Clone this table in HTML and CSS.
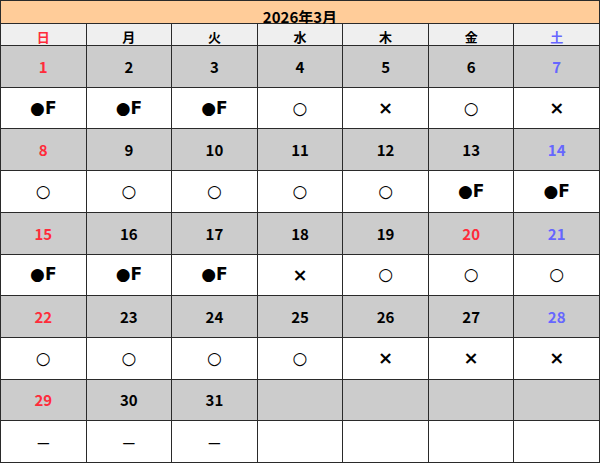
FILE: index.html
```html
<!DOCTYPE html>
<html lang="ja">
<head>
<meta charset="utf-8">
<link rel="stylesheet" href="styles.css">
</head>
<body>
<div class="cal">
  <div class="title">2026年3月</div>
  <div class="dow sun">日</div><div class="dow">月</div><div class="dow">火</div><div class="dow">水</div><div class="dow">木</div><div class="dow">金</div><div class="dow sat">土</div>

  <div class="d sun">1</div><div class="d">2</div><div class="d">3</div><div class="d">4</div><div class="d">5</div><div class="d">6</div><div class="d sat">7</div>
  <div class="m">●F</div><div class="m">●F</div><div class="m">●F</div><div class="m">○</div><div class="m x">×</div><div class="m">○</div><div class="m x">×</div>

  <div class="d sun">8</div><div class="d">9</div><div class="d">10</div><div class="d">11</div><div class="d">12</div><div class="d">13</div><div class="d sat">14</div>
  <div class="m">○</div><div class="m">○</div><div class="m">○</div><div class="m">○</div><div class="m">○</div><div class="m">●F</div><div class="m">●F</div>

  <div class="d sun">15</div><div class="d">16</div><div class="d">17</div><div class="d">18</div><div class="d">19</div><div class="d sun">20</div><div class="d sat">21</div>
  <div class="m">●F</div><div class="m">●F</div><div class="m">●F</div><div class="m x">×</div><div class="m">○</div><div class="m">○</div><div class="m">○</div>

  <div class="d sun">22</div><div class="d">23</div><div class="d">24</div><div class="d">25</div><div class="d">26</div><div class="d">27</div><div class="d sat">28</div>
  <div class="m">○</div><div class="m">○</div><div class="m">○</div><div class="m">○</div><div class="m x">×</div><div class="m x">×</div><div class="m x">×</div>

  <div class="d sun">29</div><div class="d">30</div><div class="d">31</div><div class="d"></div><div class="d"></div><div class="d"></div><div class="d"></div>
  <div class="m dash">—</div><div class="m dash">—</div><div class="m dash">—</div><div class="m"></div><div class="m"></div><div class="m"></div><div class="m"></div>
</div>
</body>
</html>
```
FILE: styles.css
```css
html, body {
  margin: 0;
  padding: 0;
  background: #ffffff;
}
.cal {
  box-sizing: border-box;
  width: 600px;
  height: 463px;
  padding: 1px;
  background: #2a2a2a;
  display: grid;
  grid-template-columns: repeat(7, 1fr);
  grid-template-rows: 22px 21px repeat(10, 1fr);
  gap: 1px;
  font-family: "Noto Sans CJK JP", "Noto Sans", sans-serif;
  font-weight: 700;
  color: #000;
}
.cal > div {
  display: flex;
  align-items: center;
  justify-content: center;
  line-height: 1;
}
.title {
  grid-column: 1 / -1;
  background: #ffcc99;
  font-size: 15px;
  padding-top: 8px;
  box-sizing: border-box;
}
.dow {
  background: #efefef;
  font-size: 13px;
  padding-top: 3px;
  box-sizing: border-box;
}
.d {
  background: #cccccc;
  font-size: 15px;
  font-family: "Noto Sans CJK JP", sans-serif;
  font-weight: 700;
}
.m {
  background: #ffffff;
  font-size: 17px;
  font-family: "DejaVu Sans", sans-serif;
}
.m.x {
  font-size: 18px;
}
.dash {
  font-family: "Noto Sans CJK JP", sans-serif;
  font-size: 14px;
}
.sun {
  color: #ff2b3a;
}
.sat {
  color: #6666ff;
}
```
